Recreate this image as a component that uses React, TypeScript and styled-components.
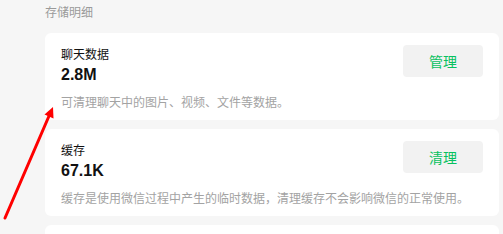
import React from "react";
import styled, { createGlobalStyle } from "styled-components";

const Global = createGlobalStyle`
  html, body { margin: 0; padding: 0; background: #f6f6f6; }
  body { font-family: "Liberation Sans", "Noto Sans CJK SC", sans-serif; }
`;

const Page = styled.div`
  position: relative;
  width: 503px;
  height: 234px;
  overflow: hidden;
  box-sizing: border-box;
  padding: 4px 4px 0 45px;
  background: #f6f6f6;
`;

const SectionTitle = styled.div`
  font-size: 12px;
  line-height: 18px;
  color: #9a9a9a;
  margin-bottom: 11px;
`;

const List = styled.div`
  display: flex;
  flex-direction: column;
  gap: 9px;
`;

const Card = styled.div`
  background: #ffffff;
  border-radius: 6px;
  height: 87px;
  box-sizing: border-box;
  padding: 14px 16px 0 16px;
  display: flex;
  flex-direction: column;
`;

const Top = styled.div`
  display: flex;
  justify-content: space-between;
  align-items: flex-start;
`;

const Info = styled.div`
  display: flex;
  flex-direction: column;
`;

const Name = styled.div`
  font-size: 12px;
  line-height: 16px;
  color: #111111;
`;

const Size = styled.div`
  font-size: 16px;
  line-height: 24px;
  font-weight: 700;
  color: #111111;
`;

const ActionButton = styled.button`
  width: 80px;
  height: 32px;
  margin-top: -2px;
  border: none;
  border-radius: 4px;
  background: #f2f2f2;
  color: #07c160;
  font-family: "Liberation Sans", "Noto Sans CJK SC", sans-serif;
  font-size: 14px;
  padding: 0;
`;

const Desc = styled.div`
  margin-top: 7px;
  font-size: 12px;
  line-height: 18px;
  color: #a3a3a3;
  white-space: nowrap;
`;

const Arrow = styled.svg`
  position: absolute;
  left: 0;
  top: 0;
  width: 503px;
  height: 234px;
  pointer-events: none;
`;

const items = [
  { name: "聊天数据", size: "2.8M", action: "管理", desc: "可清理聊天中的图片、视频、文件等数据。" },
  { name: "缓存", size: "67.1K", action: "清理", desc: "缓存是使用微信过程中产生的临时数据，清理缓存不会影响微信的正常使用。" },
];

export default function App() {
  return (
    <>
      <Global />
      <Page>
        <SectionTitle>存储明细</SectionTitle>
        <List>
          {items.map((it) => (
            <Card key={it.name}>
              <Top>
                <Info>
                  <Name>{it.name}</Name>
                  <Size>{it.size}</Size>
                </Info>
                <ActionButton>{it.action}</ActionButton>
              </Top>
              <Desc>{it.desc}</Desc>
            </Card>
          ))}
          <Card />
        </List>
        <Arrow viewBox="0 0 503 234">
          <line x1="5" y1="218" x2="49" y2="116" stroke="#ff0000" strokeWidth="3" strokeLinecap="round" />
          <polygon points="53,107 53.5,118.5 44.5,114.5" fill="#ff0000" />
        </Arrow>
      </Page>
    </>
  );
}
